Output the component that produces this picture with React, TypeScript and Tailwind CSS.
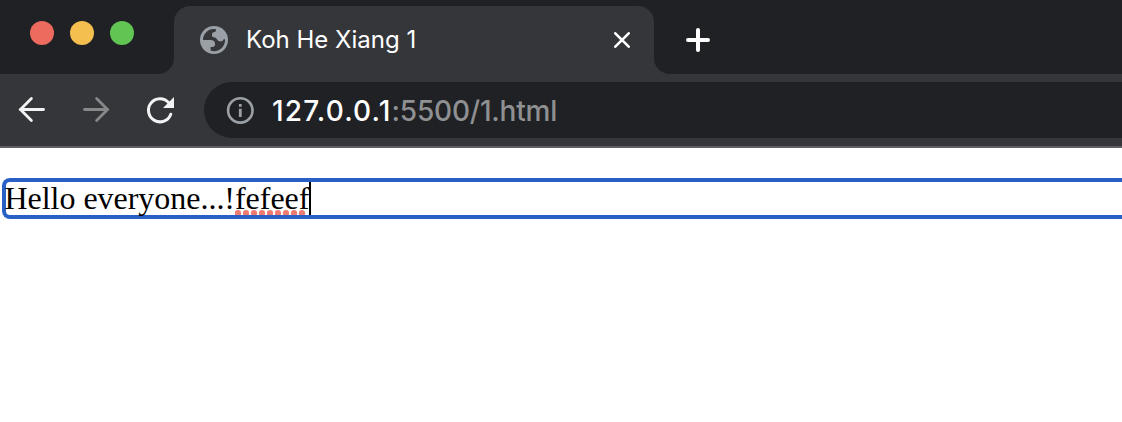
function GlobeIcon() {
  return (
    <svg width="28" height="28" viewBox="0 0 28 28" className="shrink-0">
      <circle cx="14" cy="14" r="14" fill="#9aa0a6" />
      <path
        d="M3 14A11 11 0 0 1 16 3.2V4Q16 6.2 13.8 6.3Q12 6.4 12 8.4V9.4Q12 11.2 13.6 11.2Q16 11.2 16.6 12.8Q17.6 15.4 20.6 15.4Q23 15.4 23.6 13.2H25A11 11 0 0 1 10.6 24.6V21H12.4Q15 21 15 18.6V17.8Q15 14 10.6 14Z"
        fill="#35363a"
      />
    </svg>
  );
}

function TabStrip() {
  return (
    <div className="flex h-[74px] bg-[#35363a]">
      <div className="flex w-[174px] gap-4 rounded-br-[16px] bg-[#202124] pl-[30px] pt-[21px]">
        <span className="size-6 rounded-full bg-[#ed6a5e]" />
        <span className="size-6 rounded-full bg-[#f5bf4f]" />
        <span className="size-6 rounded-full bg-[#61c554]" />
      </div>
      <div className="w-[480px] bg-[#202124] pt-[6px]">
        <div className="flex h-[68px] items-center rounded-t-[16px] bg-[#35363a] pl-[26px] pr-[24px]">
          <GlobeIcon />
          <span className="ml-[18px] font-['Inter'] text-[24px] leading-[28px] text-white">Koh He Xiang 1</span>
          <svg width="16" height="16" viewBox="0 0 16 16" className="ml-auto" stroke="#fff" strokeWidth="2.6" strokeLinecap="round">
            <path d="M1.3 1.3L14.7 14.7M14.7 1.3L1.3 14.7" />
          </svg>
        </div>
      </div>
      <div className="flex flex-1 rounded-bl-[16px] bg-[#202124] pl-8 pt-[28px]">
        <svg width="24" height="24" viewBox="0 0 24 24" stroke="#fff" strokeWidth="4" strokeLinecap="round">
          <path d="M12 2V22M2 12H22" />
        </svg>
      </div>
    </div>
  );
}

function Toolbar() {
  return (
    <div className="flex h-[74px] items-start border-b-2 border-[#5f5d62] bg-[#35363a] pt-2">
      <div className="flex h-14 w-[204px] items-center gap-8 pl-4">
        <svg width="32" height="32" viewBox="0 0 32 32" fill="none" stroke="#f1f3f4" strokeWidth="2.8" strokeLinecap="round">
          <path d="M27.5 15.5H4.5" />
          <path d="M15.4 4.6L4.5 15.5L15.4 26.4" />
        </svg>
        <svg width="32" height="32" viewBox="0 0 32 32" fill="none" stroke="#87888a" strokeWidth="2.8" strokeLinecap="round">
          <path d="M4.5 15.5H27.5" />
          <path d="M16.6 4.6L27.5 15.5L16.6 26.4" />
        </svg>
        <svg width="32" height="32" viewBox="0 0 32 32" fill="none" stroke="#f1f3f4" strokeWidth="3" strokeLinecap="round">
          <path d="M26.8 20.2A11.5 11.5 0 1 1 24.5 8.6" />
          <path d="M30 3V14H19Z" fill="#f1f3f4" stroke="none" />
        </svg>
      </div>
      <div className="flex h-14 flex-1 items-center rounded-l-full bg-[#202124] pl-[22px]">
        <svg width="28" height="28" viewBox="0 0 28 28" fill="none" stroke="#9aa0a6">
          <circle cx="14.3" cy="14.4" r="12.2" strokeWidth="2.6" />
          <path d="M14.3 12.8V21M14.3 8V10.7" strokeWidth="2.8" />
        </svg>
        <span className="ml-[18px] pt-px font-['Inter'] text-[28px] leading-[32px] text-white">
          <span className="font-medium tracking-[1.15px]">127.0.0.1</span>
          <span className="font-[450] tracking-[-0.2px] text-[#8f9092]">:5500/1.html</span>
        </span>
      </div>
    </div>
  );
}

function EditableLine() {
  return (
    <div className="ml-[2px] flex h-[41px] items-start rounded-l-[8px] border-4 border-r-0 border-[#2860c5]">
      <div className="-ml-[1.5px] flex h-[33px] items-start whitespace-nowrap font-['Liberation_Serif'] text-[32px] leading-[33px] tracking-[-0.03px] text-black">
        <span>Hello everyone...!</span>
        <span className="relative">
          fefeef
          <svg width="74" height="5" viewBox="0 0 74 5" className="absolute -left-px top-[28px]" fill="#ee7b70">
            {[3, 11, 19, 27, 35, 43, 51, 59, 67].map((x) => (
              <circle key={x} cx={x + 1} cy="3.2" r="3.1" />
            ))}
          </svg>
        </span>
        <span className="h-[33px] w-[2px] bg-black" />
      </div>
    </div>
  );
}

export default function App() {
  return (
    <div className="h-[422px] w-full overflow-hidden bg-white">
      <TabStrip />
      <Toolbar />
      <div className="pt-[30px]">
        <EditableLine />
      </div>
    </div>
  );
}
